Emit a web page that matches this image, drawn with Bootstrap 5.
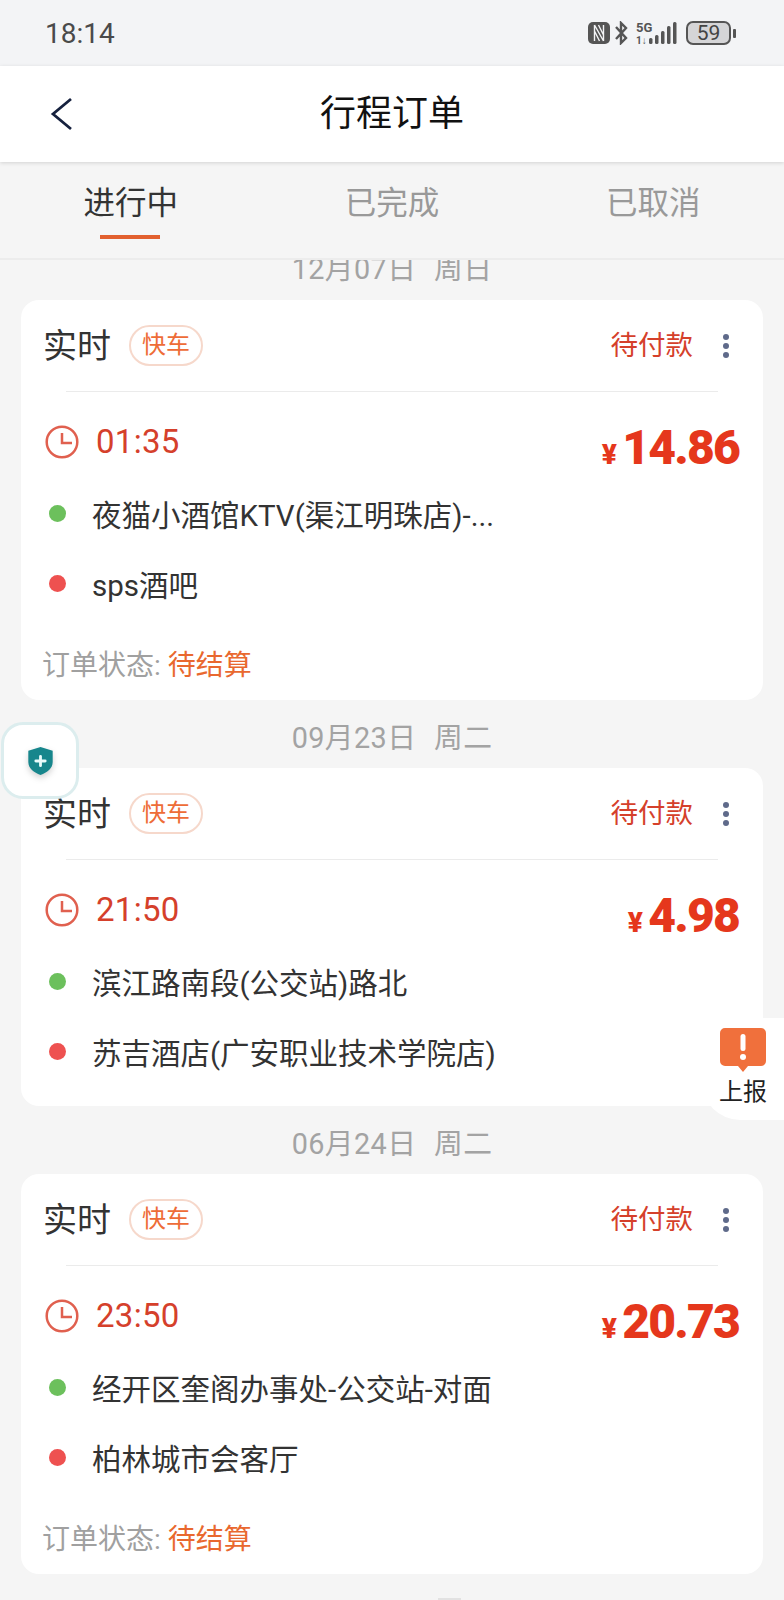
<!DOCTYPE html>
<html lang="zh-CN">
<head>
  <meta charset="UTF-8">
  <meta name="viewport" content="width=device-width, initial-scale=1.0">
  <title>行程订单</title>
  <link href="https://cdn.jsdelivr.net/npm/bootstrap@5.3.0/dist/css/bootstrap.min.css" rel="stylesheet">
  <style>
    html, body { height: 100%; margin: 0; }
    body {
      width: 784px; height: 1600px; overflow: hidden; position: relative;
      background: #f5f5f5; color: #333;
      font-family: "Roboto", "Noto Sans CJK SC", sans-serif;
    }
    .status-bar { height: 66px; background: #f3f4f6; padding: 0 48px 0 45px; color: #4a4a4a; }
    .status-time { font-size: 28px; margin-top: 1px; }
    .batt { width: 45px; height: 24px; border: 2px solid #555; border-radius: 7px; background: #d5d5d7; font-size: 21px; line-height: 20px; text-align: center; color: #444; }
    .batt-tip { width: 3px; height: 9px; background: #555; border-radius: 1px; margin-left: 2px; }
    .app-bar { height: 96px; background: #fff; box-shadow: 0 1px 4px rgba(0,0,0,.14); position: relative; z-index: 2; }
    .app-back { left: 50px; top: 31px; }
    .app-title { font-size: 36px; color: #111; line-height: 1; }
    .order-tabs { height: 98px; border-bottom: 2px solid #ececec; background: #f5f5f5; position: relative; z-index: 1; }
    .order-tab { width: 262px; text-align: center; font-size: 31.5px; color: #999; padding-top: 21px; line-height: 42px; position: relative; }
    .order-tab.on { color: #333; }
    .order-tab.on::after { content: ""; position: absolute; left: 100px; top: 73px; width: 60px; height: 4px; background: #e2602f; }
    .trip-list { height: 1340px; overflow: hidden; }
    .day-label { height: 68px; font-size: 28.8px; line-height: 76px; color: #a3a3a3; text-align: center; word-spacing: 10px; letter-spacing: .4px; }
    .day-first { height: 40px; line-height: 19px; }
    .trip-card { margin: 0 21px; background: #fff; border-radius: 18px; padding: 0 0 0 22px; }
    .trip-head { height: 91px; padding-right: 34px; }
    .trip-kind { font-size: 34px; color: #333; line-height: 1; }
    .car-tag { margin-left: 18px; width: 74px; height: 41px; line-height: 37px; border: 2px solid #f6d8cb; border-radius: 21px; color: #ee6c37; font-size: 24px; text-align: center; }
    .pay-state { font-size: 27.5px; color: #d5402b; margin-right: 30px; }
    .dots { width: 6px; }
    .dots i { display: block; width: 6px; height: 6px; border-radius: 50%; background: #5f6a8a; margin: 3px 0; }
    .trip-rule { height: 1px; background: #ebebeb; margin: 0 45px 0 23px; }
    .trip-when { height: 103px; padding-right: 24px; }
    .when-text { font-size: 33px; color: #d5402b; margin-left: 17px; margin-top: -4px; letter-spacing: .3px; }
    .clock { margin-top: -3px; margin-left: 2px; }
    .fare { color: #e5371c; font-weight: 900; font-size: 48px; line-height: 1; letter-spacing: -1.8px; margin-top: 9px; }
    .fare span { font-size: 28px; margin-right: 7px; }
    .stop-row { height: 70px; font-size: 29.5px; color: #333; }
    .stop-dot { width: 17px; height: 17px; border-radius: 50%; margin: 0 26px 0 6px; flex: none; position: relative; top: -3px; }
    .trip-stops { margin-top: -14px; }
    .trip-foot { font-size: 28px; color: #a0a0a0; height: 45px; line-height: 45px; margin-top: 22px; margin-left: -1px; }
    .trip-foot span { color: #e9682f; }
    .trip-card.tail { height: 400px; }
    .trip-card.short { height: 338px; }
    .shield-btn { left: 1px; top: 722px; width: 78px; height: 77px; background: #fff; border: 3px solid #dcedee; border-radius: 22px; z-index: 5; }
    .shield-icon { filter: drop-shadow(0 3px 3px rgba(0,0,0,.18)); }
    .report-btn { right: 0; top: 1018px; width: 82px; height: 102px; background: #fff; border-radius: 38px 0 0 38px; z-index: 5; font-size: 24px; color: #222; line-height: 1; padding-top: 10px; }
    .report-btn svg { margin-bottom: 8px; }
    .next-day { left: 438px; top: 1598px; width: 23px; height: 2px; background: #e2e2e2; }
  </style>
</head>
<body>
  <div class="status-bar d-flex align-items-center justify-content-between">
    <div class="status-time">18:14</div>
    <div class="d-flex align-items-center">
      <svg width="22" height="22" viewBox="0 0 22 22" class="me-1"><rect width="22" height="22" rx="5" fill="#555"/><path d="M6.500 3v16M15.500 3v16M6.500 3l9 16M6.500 9l5 10M15.500 13l-5-10" stroke="#f3f4f6" stroke-width="1.400" fill="none"/></svg>
      <svg width="14" height="24" viewBox="0 0 14 24" class="me-2"><path d="M2 6l10 11-5 5V2l5 5L2 18" stroke="#555" stroke-width="2.4" fill="none"/></svg>
      <svg width="42" height="24" viewBox="0 0 42 24" class="me-1"><text x="0" y="11" font-size="13" font-weight="700" font-family="Roboto" fill="#555">5G</text><text x="0" y="23" font-size="10" font-weight="700" font-family="Roboto" fill="#555">1↓</text><rect x="13" y="17" width="3.500" height="6" rx="1.500" fill="#555"/><rect x="19" y="14" width="3.500" height="9" rx="1.500" fill="#555"/><rect x="25" y="10" width="3.500" height="13" rx="1.500" fill="#555"/><rect x="31" y="5" width="3.500" height="18" rx="1.500" fill="#555"/><rect x="37" y="1" width="3.500" height="22" rx="1.500" fill="#555"/></svg>
      <div class="batt ms-1">59</div>
      <div class="batt-tip"></div>
    </div>
  </div>

  <div class="app-bar d-flex align-items-center justify-content-center">
    <svg class="app-back position-absolute" width="24" height="34" viewBox="0 0 24 34"><path d="M21 2L3 17l18 15" stroke="#16213e" stroke-width="2.800" fill="none"/></svg>
    <div class="app-title">行程订单</div>
  </div>

  <div class="order-tabs d-flex">
    <div class="order-tab on">进行中</div>
    <div class="order-tab">已完成</div>
    <div class="order-tab">已取消</div>
  </div>

  <div class="trip-list" id="trips"></div>

  <div class="shield-btn position-absolute d-flex align-items-center justify-content-center">
    <svg class="shield-icon" width="29" height="30" viewBox="0 0 30 32"><path d="M15 1l13 4v12c0 7-6 11-13 14C8 28 2 24 2 17V5z" fill="#17868c"/><path d="M15 11v10M10 16h10" stroke="#e9fbfb" stroke-width="3" stroke-linecap="round"/></svg>
  </div>

  <div class="report-btn position-absolute text-center">
    <svg width="46" height="44" viewBox="0 0 46 44" class="d-block mx-auto"><path d="M5 0h36a5 5 0 0 1 5 5v28a5 5 0 0 1-5 5H28l-5 6-5-6H5a5 5 0 0 1-5-5V5a5 5 0 0 1 5-5z" fill="#f0703c"/><rect x="20.500" y="6" width="5" height="17" rx="2.500" fill="#fff"/><circle cx="23" cy="29" r="3" fill="#fff"/></svg>
    上报
  </div>

  <div class="next-day position-absolute"></div>

  <script>
    const trips = [
      { day: '12月07日 周日', first: true, time: '01:35', fare: '14.86', from: '夜猫小酒馆KTV(渠江明珠店)-...', to: 'sps酒吧', foot: true },
      { day: '09月23日 周二', time: '21:50', fare: '4.98', from: '滨江路南段(公交站)路北', to: '苏吉酒店(广安职业技术学院店)', foot: false },
      { day: '06月24日 周二', time: '23:50', fare: '20.73', from: '经开区奎阁办事处-公交站-对面', to: '柏林城市会客厅', foot: true }
    ];

    document.getElementById('trips').innerHTML = trips.map(t => `
      <div class="day-label ${t.first ? 'day-first' : ''}">${t.day}</div>
      <div class="trip-card ${t.foot ? 'tail' : 'short'}">
        <div class="trip-head d-flex align-items-center">
          <div class="trip-kind">实时</div>
          <div class="car-tag">快车</div>
          <div class="pay-state ms-auto">待付款</div>
          <div class="dots"><i></i><i></i><i></i></div>
        </div>
        <div class="trip-rule"></div>
        <div class="trip-when d-flex align-items-center">
          <svg class="clock" width="34" height="34" viewBox="0 0 34 34"><circle cx="17" cy="17" r="15.300" stroke="#e0604f" stroke-width="2.500" fill="none"/><path d="M17 8v10h10" stroke="#e0604f" stroke-width="2.500" fill="none"/></svg>
          <div class="when-text">${t.time}</div>
          <div class="fare ms-auto"><span>¥</span>${t.fare}</div>
        </div>
        <div class="trip-stops">
          <div class="stop-row d-flex align-items-center"><div class="stop-dot" style="background:#6cc05c"></div>${t.from}</div>
          <div class="stop-row d-flex align-items-center"><div class="stop-dot" style="background:#ee5150"></div>${t.to}</div>
        </div>
        ${t.foot ? '<div class="trip-foot">订单状态: <span>待结算</span></div>' : ''}
      </div>`).join('');
  </script>
</body>
</html>
